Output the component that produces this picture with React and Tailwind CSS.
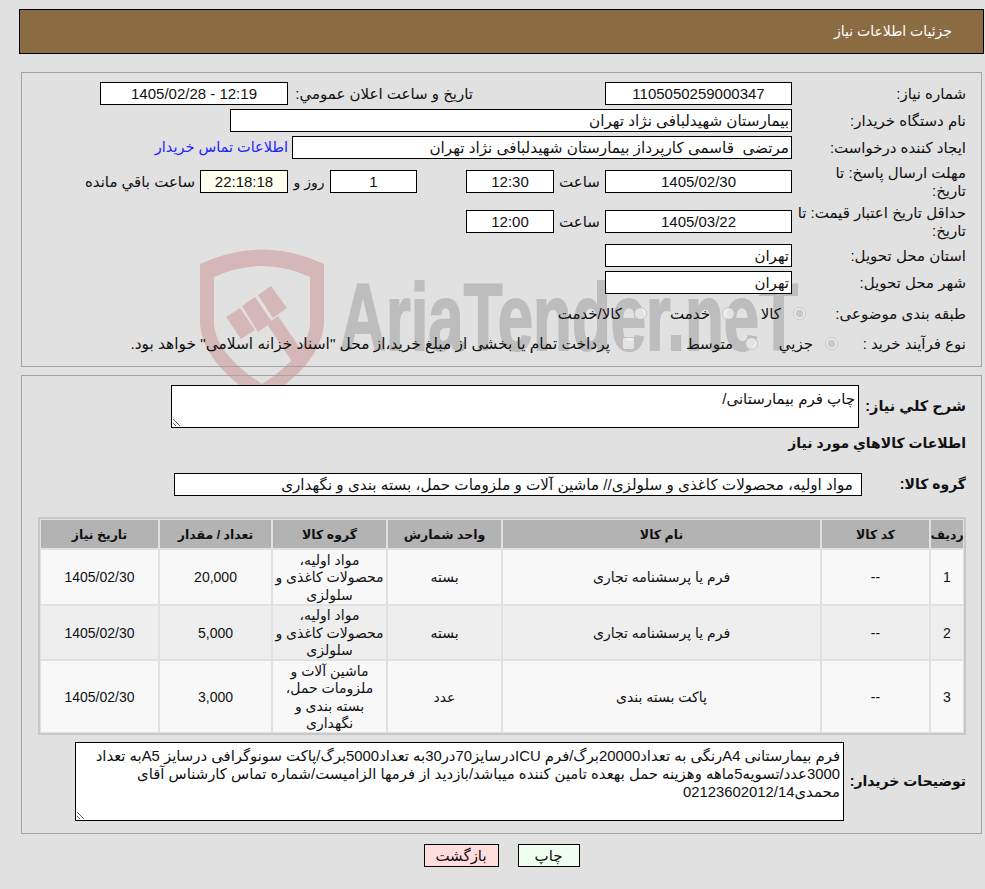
import React from "react";

const boxBase = "border border-black h-[23px] pt-[1px] flex items-center shrink-0";
const box = `bg-white ${boxBase}`;
const center = "justify-center";
const rightText = "justify-start pr-[2px] whitespace-pre";

function Watermark() {
  return (
    <svg dir="ltr" className="absolute left-[195px] top-[245px]" width="620" height="160" viewBox="0 0 620 160" aria-hidden="true">
      <path
        fill="#d6b7b7"
        fillRule="evenodd"
        d="M5 19 Q67 -10 129 19 L129 80 Q125 120 67 156 Q9 120 5 80 Z M19 32 L19 80 Q22 110 67 139 Q112 110 115 80 L115 32 Q67 10 19 32 Z"
      />
      <path
        fill="#d6b7b7"
        d="M31 72 L45 63 L60 85 L46 94 Z M47 61 L60 52 L77 77 L63 87 Z M63 50 L76 41 L92 63 L78 73 Z M72 79 L83 71 L112 113 L100 121 Z"
      />
      <text
        x="145"
        y="105"
        textLength="458"
        lengthAdjust="spacingAndGlyphs"
        textAnchor="start"
        direction="ltr"
        fill="#bdbdbd"
        stroke="#bdbdbd"
        strokeWidth="2"
        fontFamily="'Liberation Sans', sans-serif"
        fontWeight="700"
        fontSize="94"
      >
        AriaTender.neT
      </text>
    </svg>
  );
}

const Field = ({ label, children, labelW = "w-[174px]", mt = "mt-[4px]" }) => (
  <div className={`flex h-[23px] items-center ${mt}`}>
    <div className={`${labelW} shrink-0 pl-[5px] pt-[1px] leading-[18px]`}>{label}</div>
    {children}
  </div>
);

const Choice = ({ type = "radio", label, w, checked, textCls = "" }) => (
  <label className={`flex items-center gap-[12px] shrink-0 ${w}`}>
    <input type={type} disabled defaultChecked={checked} className="m-0 w-[13px] h-[13px]" />
    <span className={`pt-[1px] ${textCls}`}>{label}</span>
  </label>
);

const rows = [
  { n: "1", name: "فرم یا پرسشنامه تجاری", unit: "بسته", group: "مواد اولیه،\nمحصولات کاغذی و\nسلولزی", qty: "20,000", h: "h-[54px]", bg: "bg-[#f8f8f8]" },
  { n: "2", name: "فرم یا پرسشنامه تجاری", unit: "بسته", group: "مواد اولیه،\nمحصولات کاغذی و\nسلولزی", qty: "5,000", h: "h-[53px]", bg: "bg-[#eeeeee]" },
  { n: "3", name: "پاکت بسته بندی", unit: "عدد", group: "ماشین آلات و\nملزومات حمل،\nبسته بندی و\nنگهداری", qty: "3,000", h: "h-[71px]", bg: "bg-[#f8f8f8]" },
];

const Th = ({ children }) => (
  <div className="h-[28px] pt-[3px] bg-[#b3b3b3] flex items-center justify-center font-bold text-[12.5px] whitespace-nowrap">{children}</div>
);

const Td = ({ children, r, pre }) => (
  <div className={`${r.h} ${r.bg} pt-[2px] flex items-center justify-center text-center leading-[17.5px] ${pre ? "whitespace-pre-line" : ""}`}>{children}</div>
);

const desc =
  "فرم بیمارستانی A4رنگی به تعداد20000برگ/فرم ICUدرسایز70در30به تعداد5000برگ/پاکت سونوگرافی درسایز A5به تعداد\n3000عدد/تسویه5ماهه وهزینه حمل بهعده تامین کننده میباشد/بازدید از فرمها الزامیست/شماره تماس کارشناس آقای\nمحمدی02123602012/14";

export default function App() {
  return (
    <div
      dir="rtl"
      className="relative min-h-[889px] bg-[#e1e1e1] text-[#111111] text-[15px] pt-[9px] pl-[19px] pr-[1px] overflow-hidden"
      style={{ fontFamily: '"Liberation Sans", "DejaVu Sans", sans-serif' }}
    >
      <Watermark />

      <div className="relative">
        <div className="h-[45px] bg-[#8b6b41] border border-black flex items-center pr-[31px] text-white text-[14px]">
          جزئیات اطلاعات نیاز
        </div>

        <div className="mt-[18px] mx-[2px] h-[295px] border border-[#a3a3a3] pt-[9px] pr-[15px]">
          <Field label="شماره نیاز:" mt="">
            <div className={`${box} ${center} w-[187px]`}>1105050259000347</div>
            <div className="w-[132px] shrink-0" />
            <div className="w-[185px] shrink-0 pt-[1px] whitespace-nowrap">تاریخ و ساعت اعلان عمومي:</div>
            <div className={`${box} ${center} w-[188px]`}>12:19 - 1405/02/28</div>
          </Field>
          <Field label="نام دستگاه خریدار:">
            <div className={`${box} ${rightText} w-[562px] text-[15.2px]`}>بیمارستان شهیدلبافی نژاد تهران</div>
          </Field>
          <Field label="ایجاد کننده درخواست:">
            <div className={`${box} ${rightText} w-[500px] text-[15.2px]`}>مرتضی  قاسمی کارپرداز بیمارستان شهیدلبافی نژاد تهران</div>
            <a href="#" className="mr-[4px] pt-[1px] text-[14.5px] text-[#2222ff] whitespace-nowrap">اطلاعات تماس خریدار</a>
          </Field>
          <Field label={<>مهلت ارسال پاسخ: تا<br />تاریخ:</>} mt="mt-[11px]">
            <div className={`${box} ${center} w-[187px]`}>1405/02/30</div>
            <div className="w-[51px] shrink-0 pt-[1px] text-center">ساعت</div>
            <div className={`${box} ${center} w-[88px]`}>12:30</div>
            <div className="w-[49px] shrink-0" />
            <div className={`${box} ${center} w-[87px]`}>1</div>
            <div className="w-[42px] shrink-0 pt-[1px] text-[14px] text-center whitespace-nowrap">روز و</div>
            <div className={`${boxBase} bg-[#fffff0] ${center} w-[88px]`}>22:18:18</div>
            <div className="mr-[5px] pt-[1px] whitespace-nowrap">ساعت باقي مانده</div>
          </Field>
          <Field label="حداقل تاریخ اعتبار قیمت: تا تاریخ:" mt="mt-[17px]">
            <div className={`${box} ${center} w-[187px]`}>1405/03/22</div>
            <div className="w-[51px] shrink-0 pt-[1px] text-center">ساعت</div>
            <div className={`${box} ${center} w-[88px]`}>12:00</div>
          </Field>
          <Field label="استان محل تحویل:" mt="mt-[11px]">
            <div className={`${box} ${rightText} w-[187px]`}>تهران</div>
          </Field>
          <Field label="شهر محل تحویل:">
            <div className={`${box} ${rightText} w-[187px]`}>تهران</div>
          </Field>
          <Field label="طبقه بندی موضوعی:" labelW="w-[160px]" mt="mt-[8px]">
            <Choice label="کالا" w="w-[71px]" checked />
            <Choice label="خدمت" w="w-[88px]" />
            <Choice label="کالا/خدمت" />
          </Field>
          <Field label="نوع فرآیند خرید :" labelW="w-[128px]" mt="mt-[7px]">
            <Choice label="جزيي" w="w-[80px]" checked />
            <Choice label="متوسط" w="w-[123px]" />
            <Choice type="checkbox" textCls="text-[15.4px]" label={'پرداخت تمام یا بخشی از مبلغ خرید،از محل "اسناد خزانه اسلامی" خواهد بود.'} />
          </Field>
        </div>

        <div className="mt-[8px] mx-[2px] h-[459px] border border-[#a3a3a3] pt-[9px] pr-[15px]">
          <div className="flex items-center h-[43px]">
            <div className="w-[107px] shrink-0 font-bold text-[14.5px] whitespace-nowrap">شرح کلي نیاز:</div>
            <textarea
              readOnly
              defaultValue="چاپ فرم بیمارستانی/"
              className="w-[688px] h-[43px] bg-white border border-black px-[3px] pt-[4px] leading-[18px] resize outline-none"
            />
          </div>
          <div className="mt-[6px] h-[18px] leading-[18px] font-bold text-[14px]">اطلاعات کالاهاي مورد نیاز</div>
          <div className="mt-[21px] flex items-center h-[23px]">
            <div className="w-[104px] shrink-0 font-bold text-[14px]">گروه کالا:</div>
            <div className={`${box} w-[688px] pr-[8px] whitespace-nowrap text-[15.2px]`}>
              مواد اولیه، محصولات کاغذی و سلولزی// ماشین آلات و ملزومات حمل، بسته بندی و نگهداری
            </div>
          </div>

          <div className="mt-[21px] w-[928px] border-2 border-[#c8c8c8] p-[1px] grid grid-cols-[32px_107px_317px_113px_113px_111px_117px] gap-[2px] text-[14px]">
            <Th>ردیف</Th>
            <Th>کد کالا</Th>
            <Th>نام کالا</Th>
            <Th>واحد شمارش</Th>
            <Th>گروه کالا</Th>
            <Th>تعداد / مقدار</Th>
            <Th>تاریخ نیاز</Th>
            {rows.map((r) => (
              <React.Fragment key={r.n}>
                <Td r={r}>{r.n}</Td>
                <Td r={r}>--</Td>
                <Td r={r}>{r.name}</Td>
                <Td r={r}>{r.unit}</Td>
                <Td r={r} pre>{r.group}</Td>
                <Td r={r}>{r.qty}</Td>
                <Td r={r}>1405/02/30</Td>
              </React.Fragment>
            ))}
          </div>

          <div className="mt-[7px] flex items-center h-[79px]">
            <div className="w-[122px] shrink-0 font-bold text-[14px] whitespace-nowrap">توضیحات خريدار:</div>
            <textarea
              readOnly
              defaultValue={desc}
              className="w-[769px] h-[79px] bg-white border border-black px-[3px] pt-[4px] text-[14.85px] leading-[18px] resize outline-none overflow-hidden whitespace-pre"
            />
          </div>
        </div>

        <div className="mt-[10px] flex justify-center gap-[19px]">
          <button className="w-[62px] h-[23px] bg-[#efffef] border border-black">چاپ</button>
          <button className="w-[75px] h-[23px] bg-[#ffdddd] border border-black">بازگشت</button>
        </div>
      </div>
    </div>
  );
}
